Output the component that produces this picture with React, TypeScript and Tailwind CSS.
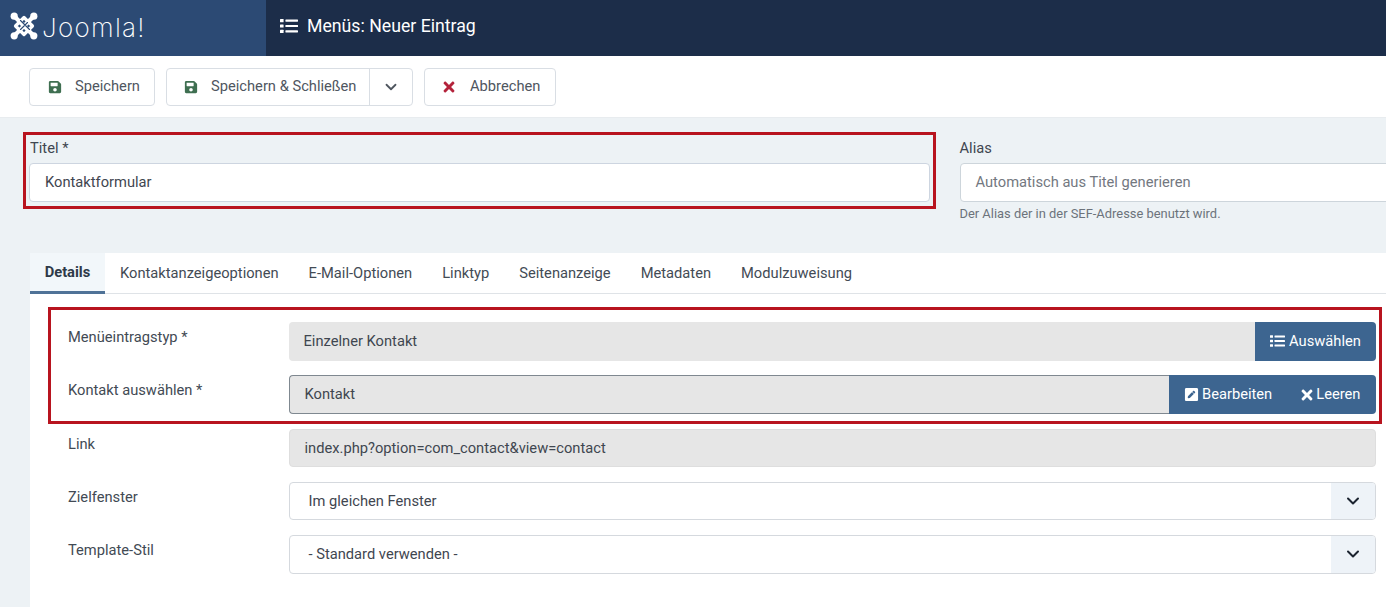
import { ChevronDown } from "lucide-react"
import { FaSave, FaTimes, FaPenSquare } from "react-icons/fa"

const fieldBase = "h-[38.5px] flex items-center rounded-[4px] text-[14.7px] text-[#3f4650]"

function ListIcon({ className }: { className: string }) {
  return (
    <svg viewBox="0 0 18 16" className={className} fill="currentColor">
      <rect x="0" y="1" width="3.6" height="3.2" rx="0.5" />
      <rect x="0" y="6.4" width="3.6" height="3.2" rx="0.5" />
      <rect x="0" y="11.8" width="3.6" height="3.2" rx="0.5" />
      <rect x="5.4" y="1.5" width="12.6" height="2.2" rx="0.4" />
      <rect x="5.4" y="6.9" width="12.6" height="2.2" rx="0.4" />
      <rect x="5.4" y="12.3" width="12.6" height="2.2" rx="0.4" />
    </svg>
  )
}

function Logo() {
  return (
    <svg viewBox="0 0 28 28" className="w-[28px] h-[28px] shrink-0" fill="none" strokeLinecap="round">
      <circle cx="4.2" cy="4.2" r="3.6" fill="#fff" />
      <circle cx="23.8" cy="4.2" r="3.6" fill="#fff" />
      <circle cx="4.2" cy="23.8" r="3.6" fill="#fff" />
      <circle cx="23.8" cy="23.8" r="3.6" fill="#fff" />
      <path d="M5 5 L23 23 M23 5 L5 23" stroke="#fff" strokeWidth="4.2" />
      <path d="M14 5.5 L22.5 14 L14 22.5 L5.5 14 Z" stroke="#fff" strokeWidth="3.2" strokeLinejoin="round" />
      <path d="M10.5 8.5 L15 13 M17.5 10.5 L13 15 M10.5 17.5 L15 13 M19.5 17.5 L15 13" stroke="#2c4a74" strokeWidth="1.1" />
    </svg>
  )
}

function ToolbarButton({ icon, label, className = "" }: { icon: React.ReactNode; label: string; className?: string }) {
  return (
    <div className={`h-[38px] flex items-center bg-white border border-[#d9dee4] rounded-[4px] text-[14.7px] text-[#4f565f] ${className}`}>
      {icon}
      <span>{label}</span>
    </div>
  )
}

function FormRow({ label, children }: { label: string; children: React.ReactNode }) {
  return (
    <div className="flex h-[53.25px]">
      <div className="w-[258.5px] pt-[4px] pl-[38px] text-[14.7px] text-[#424a54]">{label}</div>
      <div className="flex-1">{children}</div>
    </div>
  )
}

function SelectBox({ value }: { value: string }) {
  return (
    <div className={`${fieldBase} bg-white border border-[#d5d9de] pl-[19px] overflow-hidden`}>
      <span className="flex-1">{value}</span>
      <div className="w-[44px] h-full bg-[#eef3f8] flex items-center justify-center">
        <ChevronDown className="w-[20px] h-[20px] text-[#1c2430]" strokeWidth={2.4} />
      </div>
    </div>
  )
}

const tabs = ["Kontaktanzeigeoptionen", "E-Mail-Optionen", "Linktyp", "Seitenanzeige", "Metadaten", "Modulzuweisung"]

export default function App() {
  return (
    <div className="relative w-[1386px] h-[607px] overflow-hidden bg-[#edf2f5] font-['Roboto',sans-serif]">
      {/* Kopfzeile */}
      <header className="h-[56px] flex bg-[#1c2d49] text-white">
        <div className="w-[266px] bg-[#2c4a74] flex items-center pl-[10px] pb-[4px] gap-[4px]">
          <Logo />
          <span className="font-['Inter',sans-serif] font-extralight text-[26px] tracking-[1.3px] mt-[2px]">Joomla!</span>
        </div>
        <div className="flex items-center pl-[14px] pb-[4px] gap-[9px] text-[17.7px]">
          <ListIcon className="w-[18px] h-[16px]" />
          <span>Menüs: Neuer Eintrag</span>
        </div>
      </header>

      {/* Toolbar */}
      <div className="h-[62px] bg-white flex items-center pl-[29px] gap-[11px] border-b border-[#e8ecef]">
        <ToolbarButton
          className="w-[126px] pl-[18px] gap-[13px]"
          icon={<FaSave className="w-[14px] h-[14px] text-[#3f6f51]" />}
          label="Speichern"
        />
        <div className="h-[38px] w-[247px] flex items-center bg-white border border-[#d9dee4] rounded-[4px] text-[14.7px] text-[#4f565f]">
          <div className="flex-1 h-full flex items-center pl-[17px] gap-[13px] border-r border-[#d9dee4]">
            <FaSave className="w-[14px] h-[14px] text-[#3f6f51]" />
            <span>Speichern &amp; Schließen</span>
          </div>
          <div className="w-[42px] flex justify-center">
            <ChevronDown className="w-[18px] h-[18px] text-[#4f565f]" strokeWidth={2.4} />
          </div>
        </div>
        <ToolbarButton
          className="w-[132px] pl-[16px] gap-[13px]"
          icon={<FaTimes className="w-[16px] h-[16px] text-[#b4233b]" />}
          label="Abbrechen"
        />
      </div>

      {/* Titel und Alias */}
      <div className="h-[135px] flex pl-[29px] pt-[19px] gap-[29.5px]">
        <div className="w-[901px] shrink-0">
          <div className="text-[14.7px] text-[#3f4650] h-[26px] pl-[1px]">Titel *</div>
          <div className={`${fieldBase} bg-white border border-[#cdd5e0] pl-[15px]`}>Kontaktformular</div>
        </div>
        <div className="w-[500px] shrink-0">
          <div className="text-[14.7px] text-[#3f4650] h-[26px]">Alias</div>
          <div className={`${fieldBase} bg-white border border-[#cdd5db] pl-[15px] text-[#73787f]`}>Automatisch aus Titel generieren</div>
          <div className="text-[12.9px] text-[#6c737b] mt-[2px]">Der Alias der in der SEF-Adresse benutzt wird.</div>
        </div>
      </div>

      {/* Tabs */}
      <div className="ml-[30px] bg-white h-[354px]">
        <div className="h-[41px] flex border-b border-[#dfe3e7] text-[14.7px] text-[#434b55]">
          <div className="w-[75px] h-[41px] flex items-center justify-center font-bold text-[#2e3a48] bg-[#f2f7fa] border-b-[3px] border-[#4f7297]">Details</div>
          <div className="flex pl-[15px] gap-[30px] h-[40px] items-center">
            {tabs.map((t) => (
              <span key={t}>{t}</span>
            ))}
          </div>
        </div>

        <div className="pt-[28px] pr-[10px]">
          <FormRow label="Menüeintragstyp *">
            <div className="flex">
              <div className={`${fieldBase} flex-1 bg-[#e6e6e6] rounded-r-none pl-[15px]`}>Einzelner Kontakt</div>
              <div className="w-[121px] h-[38.5px] bg-[#3d6590] rounded-r-[4px] flex items-center justify-center gap-[4px] text-white text-[14.7px]">
                <ListIcon className="w-[15px] h-[14px]" />
                <span>Auswählen</span>
              </div>
            </div>
          </FormRow>
          <FormRow label="Kontakt auswählen *">
            <div className="flex">
              <div className={`${fieldBase} flex-1 bg-[#e6e6e6] border border-[#7f8890] border-r-0 rounded-r-none pl-[15px]`}>Kontakt</div>
              <div className="w-[207px] h-[38.5px] bg-[#3d6590] rounded-r-[4px] flex items-center text-white text-[14.7px] pl-[15px]">
                <FaPenSquare className="w-[15px] h-[15px]" />
                <span className="ml-[3px]">Bearbeiten</span>
                <FaTimes className="w-[16px] h-[16px] ml-[27px]" />
                <span className="ml-[1px]">Leeren</span>
              </div>
            </div>
          </FormRow>
          <FormRow label="Link">
            <div className={`${fieldBase} bg-[#e6e6e6] border border-[#dedede] pl-[15px]`}>index.php?option=com_contact&amp;view=contact</div>
          </FormRow>
          <FormRow label="Zielfenster">
            <SelectBox value="Im gleichen Fenster" />
          </FormRow>
          <FormRow label="Template-Stil">
            <SelectBox value="- Standard verwenden -" />
          </FormRow>
        </div>
      </div>

      {/* rote Markierungen */}
      <div className="absolute left-[23px] top-[132px] w-[913px] h-[77px] border-[3px] border-[#b8141f]" />
      <div className="absolute left-[48px] top-[307px] w-[1334px] h-[117px] border-[3px] border-[#b8141f]" />
    </div>
  )
}
